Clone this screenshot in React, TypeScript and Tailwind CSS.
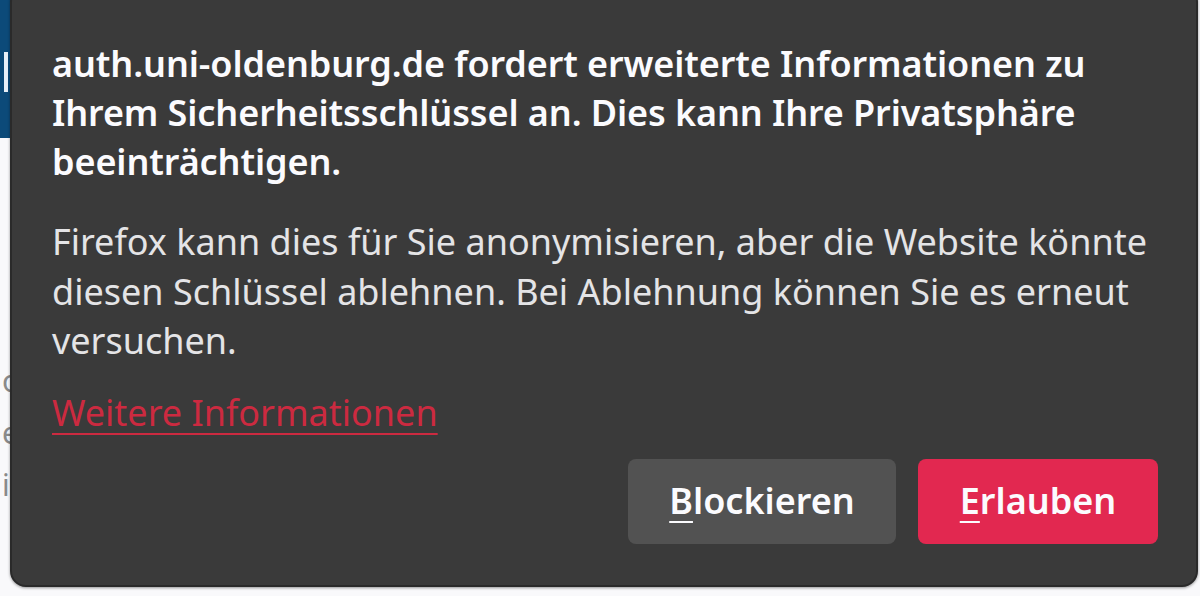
import React from 'react'

const App = () => {
  return (
    <div className='relative w-[1200px] h-[596px] overflow-hidden bg-[#f9f9fb]' style={{ fontFamily: '"Noto Sans", "Open Sans", sans-serif' }}>
      {/* page behind the popup */}
      <div className='h-[138px] w-[14px] bg-[#0c4a79] pt-[52px] pl-[4px]'>
        <div className='w-[4px] h-[40px] bg-[#e8f0f8]'></div>
      </div>
      <div className='flex flex-col gap-[22px] pl-[2px] pt-[228px] text-[30px] text-[#8a8a8a] leading-none'>
        <span>o</span>
        <span>e</span>
        <span>i</span>
      </div>

      <div className='absolute left-[10px] top-[-14px] right-[2px] bottom-[9px] rounded-[16px] bg-[#3a3a3a] border-2 border-[#2a2a2a] shadow-[0_1px_3px_rgba(0,0,0,0.4)] pl-[40px] pr-[38px] pt-[51px] text-[#fbfbfe]'>
        <h1 className='text-[36px] font-semibold leading-[49px] tracking-[-0.1px] whitespace-nowrap'>
          auth.uni-oldenburg.de fordert erweiterte Informationen zu<br />
          Ihrem Sicherheitsschlüssel an. Dies kann Ihre Privatsphäre<br />
          beeinträchtigen.
        </h1>
        <p className='mt-[31px] text-[36px] leading-[49.5px] text-[#e4e4e6] whitespace-nowrap'>
          Firefox kann dies für Sie anonymisieren, aber die Website könnte<br />
          diesen Schlüssel ablehnen. Bei Ablehnung können Sie es erneut<br />
          versuchen.
        </p>
        <a href='#' className='mt-[22px] inline-block text-[36px] leading-[49px] text-[#cc2a40] underline underline-offset-[7px] decoration-[2px]'>
          Weitere Informationen
        </a>
        <div className='mt-[22px] flex justify-end gap-[22px]'>
          <button className='w-[268px] h-[85px] rounded-[8px] bg-[#525252] text-[36px] font-semibold text-[#fbfbfe]'>
            <span className='underline underline-offset-[7px] decoration-[2px]'>B</span>lockieren
          </button>
          <button className='w-[240px] h-[85px] rounded-[8px] bg-[#e22850] text-[36px] font-semibold text-[#fbfbfe]'>
            <span className='underline underline-offset-[7px] decoration-[2px]'>E</span>rlauben
          </button>
        </div>
      </div>
    </div>
  )
}

export default App
